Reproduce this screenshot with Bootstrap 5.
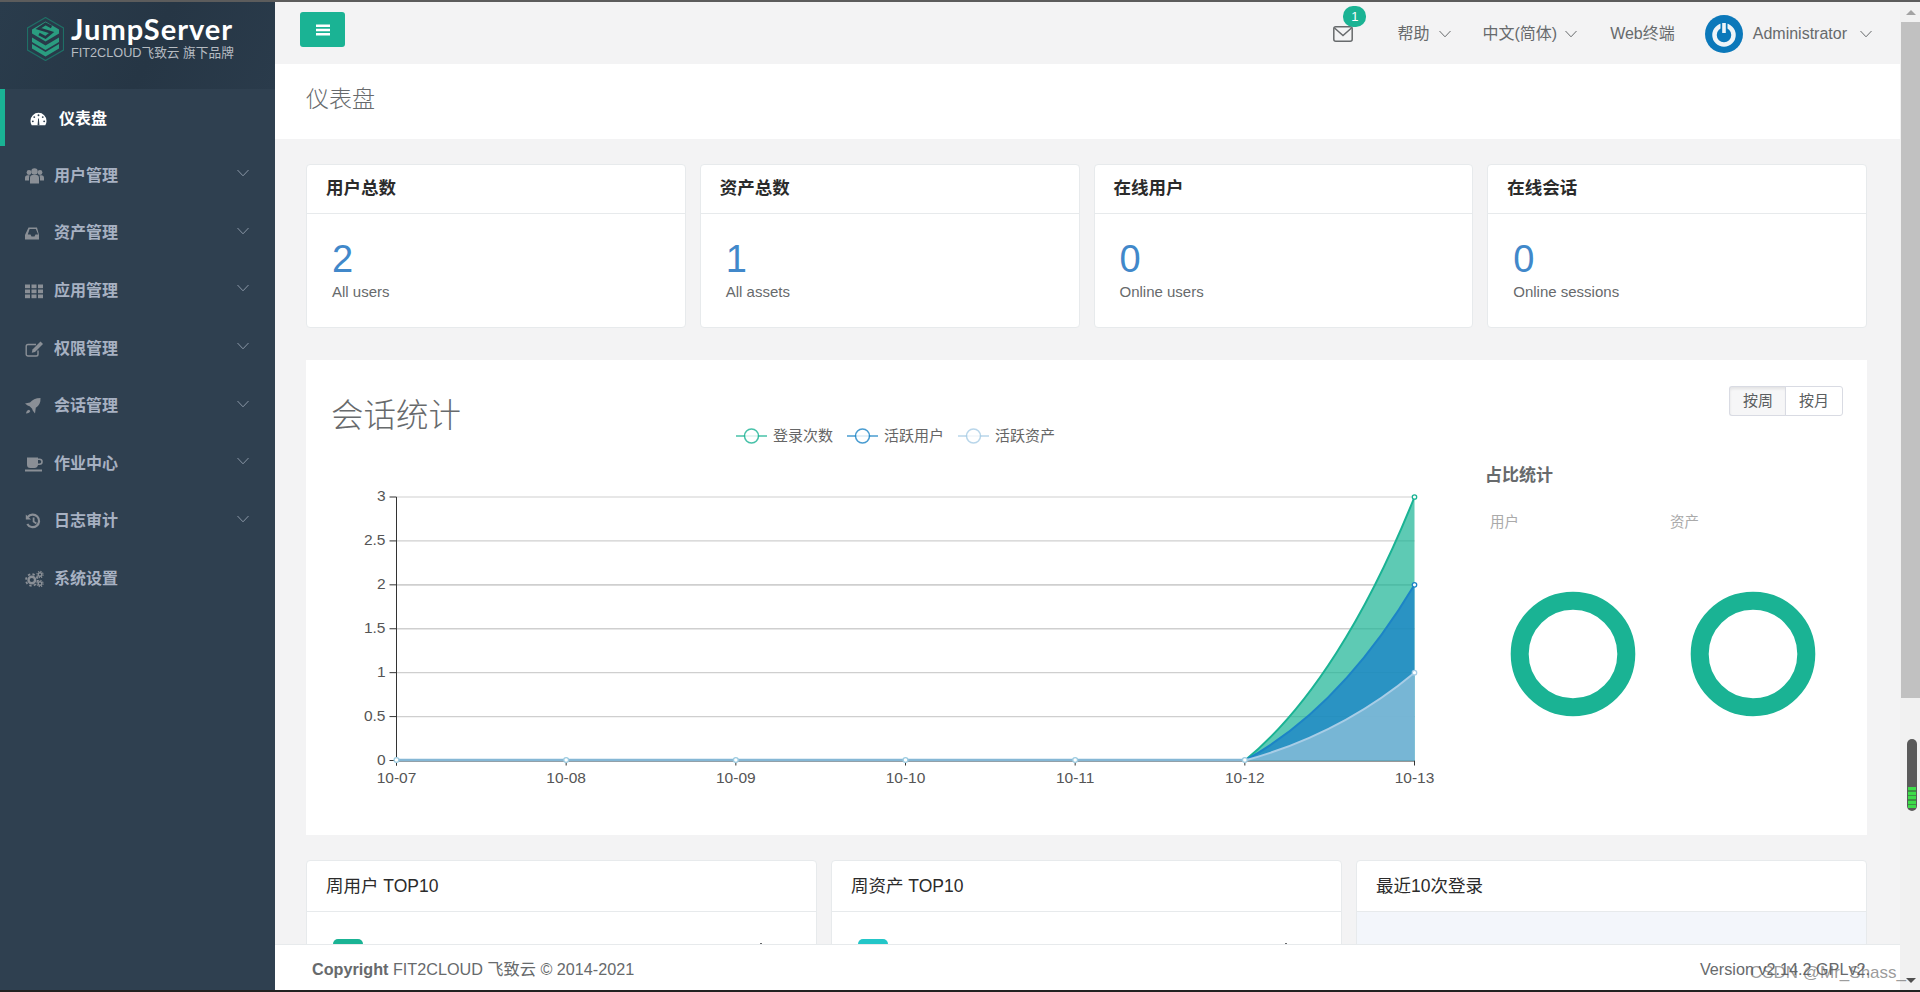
<!doctype html>
<html lang="zh-CN">
<head>
<meta charset="utf-8">
<title>仪表盘</title>
<link href="https://cdn.jsdelivr.net/npm/bootstrap@5.3.0/dist/css/bootstrap.min.css" rel="stylesheet">
<style>
:root{--js-fonts:"Liberation Sans","Noto Sans CJK SC",sans-serif;}
html,body{height:100%;overflow:hidden;}
body{font-family:var(--js-fonts);font-size:13px;color:#676a6c;background:#f3f3f4;}
.app-shell{height:992px;border-top:2px solid #5c5c5c;border-bottom:2px solid #222;position:relative;}
.side-col{width:275px;flex:none;background:#2f4050;}
.logo-box{height:87px;background:linear-gradient(115deg,#2a3c4c 0,#263645 55%,#2a3b4b 100%);padding:15px 0 0 27px;}
.logo-mark{margin-right:7px;flex:none;}
.logo-main{font-family:"Lato","Liberation Sans",sans-serif;font-weight:700;font-size:29px;line-height:32px;color:#fff;letter-spacing:1px;margin-top:-4px;}
.logo-sub{font-size:12.7px;line-height:14px;color:#b6bcc2;margin-top:1px;white-space:nowrap;}
.side-item{height:57.6px;padding:2px 0 0 25px;color:#a7b1c2;font-weight:700;font-size:16px;}
.side-item svg.ico{width:19px;height:18px;margin-right:10px;flex:none;fill:#8a8f96;}
.side-item .chev{margin-left:auto;margin-right:26px;margin-top:-5px;}
.side-first{height:57px;border-left:5px solid #1ab394;padding-left:25px;color:#fff;}
.side-first svg.ico{width:17px;fill:#fff;margin-right:12px;}
.main-col{min-width:0;}
.top-strip{height:62px;flex:none;padding:10px 28px 0 25px;background:#f3f3f4;}
.top-tools{height:44px;}
.menu-btn{width:45px;height:35px;background:#1ab394;border-radius:3px;border:0;padding:0;}
.top-link{font-size:16px;color:#676a6c;white-space:nowrap;}
.mail-box{position:relative;width:20px;height:16px;margin-right:44px;margin-top:-5px;}
.mail-badge{position:absolute;left:10px;top:-18px;width:23px;height:21px;border-radius:10px;background:#1ab394;color:#fff;font-size:13px;line-height:21px;text-align:center;}
.chev-help{margin:0 31px 0 10px;}
.chev-lang{margin:0 33px 0 8px;}
.web-link{margin-right:30px;}
.avatar-ico{margin-right:10px;}
.user-link{margin-right:13px;}
.page-head{height:75px;flex:none;background:#fff;padding:0 0 4px 31px;font-size:23px;font-weight:300;color:#676a6c;}
.scroll-part{flex:1 1 auto;min-height:0;overflow:hidden;padding:25px 33px 0 31px;}
.stat-row{display:grid;grid-template-columns:repeat(4,1fr);gap:14px;}
.info-card{background:#fff;border:1px solid #e7eaec;border-radius:4px;overflow:hidden;}
.info-head{height:49px;padding:0 19px 2px;border-bottom:1px solid #e7eaec;font-size:17.5px;font-weight:700;color:#2b2b2b;}
.info-body{height:113px;padding:20px 25px 0;}
.big-num{font-size:38px;line-height:50px;color:#4188ca;}
.num-note{font-size:15px;line-height:16px;color:#676a6c;}
.chart-panel{margin-top:32px;height:475px;background:#fff;position:relative;}
.chart-title{position:absolute;left:25px;top:35px;font-size:32.5px;line-height:42px;font-weight:300;color:#676a6c;}
.range-group{position:absolute;right:24px;top:26px;}
.range-btn{font-size:15px;line-height:18px;height:30px;padding:5px 13px;border:1px solid #d9dbe3;background:#fff;color:#5b5e60;border-radius:0;}
.range-btn.on{background:#f6f6f7;box-shadow:inset 0 2px 3px rgba(0,0,0,.08);}
.range-btn:first-child{border-radius:3px 0 0 3px;border-right:0;}
.range-btn:last-child{border-radius:0 3px 3px 0;}
.chart-svg{position:absolute;left:0;top:0;width:1561px;height:475px;}
.chart-svg text{font-family:var(--js-fonts);}
.rank-row{display:grid;grid-template-columns:repeat(3,1fr);gap:14px;margin-top:25px;}
.rank-head{height:51px;padding:0 19px;border-bottom:1px solid #e7eaec;font-size:17.5px;color:#2b2b2b;}
.rank-body{height:80px;padding:27px 54px 0 26px;}
.rank-tile{width:30px;height:30px;border-radius:5px;background:#1ab394;}
.rank-tile-alt{background:#23c6c8;}
.rank-dot{width:2px;height:2px;margin-top:4px;background:#676a6c;}
.rank-body-alt{background:#f3f6fb;}
.foot-bar{height:46px;flex:none;background:#fff;border-top:1px solid #e7eaec;padding:3px 30px 0 37px;font-size:16.2px;color:#676a6c;}
.fake-scroll{width:20px;flex:none;background:#f1f1f1;position:relative;}
.scroll-thumb{position:absolute;left:1px;right:0;top:20px;height:676px;background:#c1c1c1;}
.scroll-up,.scroll-down{position:absolute;left:6px;width:0;height:0;border-left:5px solid transparent;border-right:5px solid transparent;}
.scroll-up{top:8px;border-bottom:5px solid #a3a3a3;}
.scroll-down{bottom:7px;border-top:5px solid #505050;}
.side-widget{position:absolute;left:7px;top:737px;width:10px;height:72px;border-radius:5px;background:#5a5a5a;overflow:hidden;}
.widget-green{position:absolute;left:1px;right:1px;bottom:3px;height:21px;background:repeating-linear-gradient(#3ddc4a 0 3px,#3f8f46 3px 4.5px);}
.mark-overlay{position:absolute;right:14px;bottom:5px;font-size:17px;line-height:24px;color:rgba(90,90,90,.62);pointer-events:none;white-space:nowrap;}
</style>
</head>
<body>
<div class="app-shell d-flex">
  <aside class="side-col d-flex flex-column">
    <div class="logo-box d-flex align-items-start">
      <svg class="logo-mark" width="37" height="44" viewBox="0 0 37 44" aria-hidden="true">
        <path d="M18.500 .5 36.500 11V33L18.500 43.500 .5 33V11Z" fill="none" stroke="#1f6f66" stroke-width="1.200"/>
        <path d="M18.500 4.500 32 12.500V16.500L18.500 24.500 5 16.500V12.500Z" fill="#2a9d80"/>
        <path d="M24.500 10 18.500 6.800 11.500 11.500 24.500 15.500 18.500 20.500 12 17" fill="none" stroke="#263645" stroke-width="2.600"/>
        <path d="M5 20.500 18.500 28.500 32 20.500V25L18.500 33 5 25Z" fill="#2a9d80"/>
        <path d="M5 27 18.500 35 32 27V31.500L18.500 39.500 5 31.500Z" fill="#2a9d80"/>
      </svg>
      <div>
        <div class="logo-main">JumpServer</div>
        <div class="logo-sub">FIT2CLOUD飞致云 旗下品牌</div>
      </div>
    </div>
    <div class="side-item side-first d-flex align-items-center">
      <svg class="ico" viewBox="0 0 18 16"><path d="M9 1.500A8.500 8.500 0 0 0 .5 10c0 1.700.5 3.200 1.300 4.500h14.400A8.500 8.500 0 0 0 17.500 10 8.500 8.500 0 0 0 9 1.500Z"/><g fill="#2f4050"><circle cx="9" cy="4" r="1"/><circle cx="4.500" cy="6" r="1"/><circle cx="13.500" cy="6" r="1"/><circle cx="3" cy="10.500" r="1"/><circle cx="15" cy="10.500" r="1"/><path d="M8 14.500 8.600 7.500h.8L10 14.500Z"/></g></svg>
      <span>仪表盘</span>
    </div>
    <div class="side-item d-flex align-items-center">
      <svg class="ico" viewBox="0 0 19 18"><circle cx="4" cy="5.500" r="2.400"/><circle cx="15" cy="5.500" r="2.400"/><circle cx="9.500" cy="4.500" r="3.200"/><path d="M0 13.500V11c0-2 1-2.800 2.500-2.800h2L4 11v2.500ZM19 13.500V11c0-2-1-2.800-2.500-2.800h-2L15 11v2.500ZM5 16.500V11c0-2 1-3 2.500-3h4c1.500 0 2.500 1 2.500 3v5.500Z"/></svg>
      <span>用户管理</span>
      <svg class="chev" width="12" height="8" viewBox="0 0 12 8"><path d="M.5 1 6 6.800 11.500 1" fill="none" stroke="#8a96a5"/></svg>
    </div>
    <div class="side-item d-flex align-items-center">
      <svg class="ico" viewBox="0 0 19 18"><path d="M3.500 3.500h8.500L14 11v4.500H0V11Zm1.100 1.500L2.800 10.500h2.700l1 2h3l1-2h2.700L10.800 5Z"/></svg>
      <span>资产管理</span>
      <svg class="chev" width="12" height="8" viewBox="0 0 12 8"><path d="M.5 1 6 6.800 11.500 1" fill="none" stroke="#8a96a5"/></svg>
    </div>
    <div class="side-item d-flex align-items-center">
      <svg class="ico" viewBox="0 0 19 18"><rect x="0" y="2.500" width="5" height="3.700"/><rect x="6.500" y="2.500" width="5" height="3.700"/><rect x="13" y="2.500" width="5" height="3.700"/><rect x="0" y="7.500" width="5" height="3.700"/><rect x="6.500" y="7.500" width="5" height="3.700"/><rect x="13" y="7.500" width="5" height="3.700"/><rect x="0" y="12.500" width="5" height="3.700"/><rect x="6.500" y="12.500" width="5" height="3.700"/><rect x="13" y="12.500" width="5" height="3.700"/></svg>
      <span>应用管理</span>
      <svg class="chev" width="12" height="8" viewBox="0 0 12 8"><path d="M.5 1 6 6.800 11.500 1" fill="none" stroke="#8a96a5"/></svg>
    </div>
    <div class="side-item d-flex align-items-center">
      <svg class="ico" viewBox="0 0 19 18"><path d="M13 10.500v3.700c0 1-.7 1.800-1.800 1.800H3c-1 0-1.800-.8-1.800-1.800V6.300c0-1 .8-1.800 1.800-1.800h8" fill="none" stroke="#8a8f96" stroke-width="1.400"/><path d="M15.500 1.500 18 4 10 12l-3.200.7.700-3.200Z"/></svg>
      <span>权限管理</span>
      <svg class="chev" width="12" height="8" viewBox="0 0 12 8"><path d="M.5 1 6 6.800 11.500 1" fill="none" stroke="#8a96a5"/></svg>
    </div>
    <div class="side-item d-flex align-items-center">
      <svg class="ico" viewBox="0 0 19 18"><path d="M15.500 1c.3 4.500-1.300 7.700-4.700 9.800l-.8 5.700-2.300-3-.6-1.800-2.500-2.500-2-.6L0 6.600l5-1C7.300 2.800 10.500 1 15.500 1Z"/><path d="M1 16.500c.3-2 1.200-3.300 3-3.800l1.300 1.300c-.5 1.700-1.800 2.300-4.300 2.500Z"/></svg>
      <span>会话管理</span>
      <svg class="chev" width="12" height="8" viewBox="0 0 12 8"><path d="M.5 1 6 6.800 11.500 1" fill="none" stroke="#8a96a5"/></svg>
    </div>
    <div class="side-item d-flex align-items-center">
      <svg class="ico" viewBox="0 0 19 18"><path d="M0 14.500h17v2H0ZM2 2.500h11v1h1.500a3.300 3.300 0 0 1 0 6.600H13a3.800 3.800 0 0 1-3.500 3H5.500A3.500 3.500 0 0 1 2 9.500Zm11 2.500V8.500h1.500a1.700 1.700 0 0 0 0-3.500Z" fill-rule="evenodd"/></svg>
      <span>作业中心</span>
      <svg class="chev" width="12" height="8" viewBox="0 0 12 8"><path d="M.5 1 6 6.800 11.500 1" fill="none" stroke="#8a96a5"/></svg>
    </div>
    <div class="side-item d-flex align-items-center">
      <svg class="ico" viewBox="0 0 19 18"><path d="M2.800 5A6.300 6.300 0 1 1 2.300 12" fill="none" stroke="#8a8f96" stroke-width="2.200"/><path d="M.8 2.500 6 7.500H.8Z"/><path d="M7.700 5.500h1.800v3.700l2.400 1.600-1 1.400-3.200-2.200Z"/></svg>
      <span>日志审计</span>
      <svg class="chev" width="12" height="8" viewBox="0 0 12 8"><path d="M.5 1 6 6.800 11.500 1" fill="none" stroke="#8a96a5"/></svg>
    </div>
    <div class="side-item d-flex align-items-center">
      <svg class="ico" viewBox="0 0 19 18"><circle cx="6.800" cy="10" r="3.300" fill="none" stroke="#8a8f96" stroke-width="2.400"/><circle cx="6.800" cy="10" r="5.800" fill="none" stroke="#8a8f96" stroke-width="1.800" stroke-dasharray="2.300 2.250"/><circle cx="15" cy="4.500" r="1.800" fill="none" stroke="#8a8f96" stroke-width="1.400"/><circle cx="15" cy="4.500" r="3.100" fill="none" stroke="#8a8f96" stroke-width="1.100" stroke-dasharray="1.300 1.130"/><circle cx="15" cy="13.500" r="1.800" fill="none" stroke="#8a8f96" stroke-width="1.400"/><circle cx="15" cy="13.500" r="3.100" fill="none" stroke="#8a8f96" stroke-width="1.100" stroke-dasharray="1.300 1.130"/></svg>
      <span>系统设置</span>
    </div>
  </aside>

  <div class="main-col d-flex flex-column flex-grow-1">
    <div class="top-strip d-flex align-items-start">
      <button class="menu-btn d-flex align-items-center justify-content-center" aria-label="menu">
        <svg width="14" height="12" viewBox="0 0 14 12"><path d="M0 .5h14v2.400H0ZM0 4.800h14v2.400H0ZM0 9.100h14v2.400H0Z" fill="#fff"/></svg>
      </button>
      <div class="top-tools ms-auto d-flex align-items-center">
        <div class="mail-box">
          <svg width="20" height="16" viewBox="0 0 20 16"><rect x=".8" y=".8" width="18.400" height="14.400" rx="2" fill="none" stroke="#676a6c" stroke-width="1.500"/><path d="M1.500 2 10 9.500 18.500 2" fill="none" stroke="#676a6c" stroke-width="1.500"/></svg>
          <span class="mail-badge">1</span>
        </div>
        <span class="top-link">帮助</span>
        <svg class="chev-help" width="12" height="8" viewBox="0 0 12 8"><path d="M.5 1 6 6.800 11.500 1" fill="none" stroke="#676a6c"/></svg>
        <span class="top-link">中文(简体)</span>
        <svg class="chev-lang" width="12" height="8" viewBox="0 0 12 8"><path d="M.5 1 6 6.800 11.500 1" fill="none" stroke="#676a6c"/></svg>
        <span class="top-link web-link">Web终端</span>
        <svg class="avatar-ico" width="38" height="38" viewBox="0 0 38 38"><circle cx="19" cy="19" r="19" fill="#0b78ba"/><circle cx="19" cy="20" r="9.500" fill="none" stroke="#eef4f8" stroke-width="4.500"/><rect x="15.500" y="6" width="7" height="13" fill="#0b78ba"/><rect x="17.200" y="8" width="3.600" height="10" fill="#eef4f8"/></svg>
        <span class="top-link user-link">Administrator</span>
        <svg width="12" height="8" viewBox="0 0 12 8"><path d="M.5 1 6 6.800 11.500 1" fill="none" stroke="#676a6c"/></svg>
      </div>
    </div>
    <div class="page-head d-flex align-items-center">仪表盘</div>
    <div class="scroll-part">
      <div class="stat-row">
        <div class="info-card"><div class="info-head d-flex align-items-center">用户总数</div><div class="info-body"><div class="big-num">2</div><div class="num-note">All users</div></div></div>
        <div class="info-card"><div class="info-head d-flex align-items-center">资产总数</div><div class="info-body"><div class="big-num">1</div><div class="num-note">All assets</div></div></div>
        <div class="info-card"><div class="info-head d-flex align-items-center">在线用户</div><div class="info-body"><div class="big-num">0</div><div class="num-note">Online users</div></div></div>
        <div class="info-card"><div class="info-head d-flex align-items-center">在线会话</div><div class="info-body"><div class="big-num">0</div><div class="num-note">Online sessions</div></div></div>
      </div>
      <div class="chart-panel">
        <svg id="chart" class="chart-svg" viewBox="0 0 1561 475"></svg>
        <div class="chart-title">会话统计</div>
        <div class="btn-group range-group" role="group">
          <button class="btn range-btn on">按周</button>
          <button class="btn range-btn">按月</button>
        </div>
      </div>
      <div class="rank-row">
        <div class="info-card"><div class="rank-head d-flex align-items-center">周用户 TOP10</div><div class="rank-body d-flex justify-content-between"><div class="rank-tile"></div><div class="rank-dot"></div></div></div>
        <div class="info-card"><div class="rank-head d-flex align-items-center">周资产 TOP10</div><div class="rank-body d-flex justify-content-between"><div class="rank-tile rank-tile-alt"></div><div class="rank-dot"></div></div></div>
        <div class="info-card"><div class="rank-head d-flex align-items-center">最近10次登录</div><div class="rank-body rank-body-alt"></div></div>
      </div>
    </div>
    <div class="foot-bar d-flex align-items-center justify-content-between">
      <span><b>Copyright</b> FIT2CLOUD 飞致云 © 2014-2021</span>
      <span>Version v2.14.2 GPLv2.</span>
    </div>
  </div>
  <div class="fake-scroll">
    <span class="scroll-up"></span>
    <div class="scroll-thumb"></div>
    <div class="side-widget"><div class="widget-green"></div></div>
    <span class="scroll-down"></span>
  </div>
  <div class="mark-overlay">CSDN @Mr_Shass_</div>
</div>
<script>
(function(){
  var s='', i;
  // chart panel origin in page: x=306, y=360
  var X0=90.5, X1=1108.5, Y0=400.5, Y3=137;
  var W=(X1-X0)/6;
  function y(v){return Y0-(Y0-Y3)*v/3;}
  [0.5,1,1.5,2,2.5,3].forEach(function(v){
    s+='<line x1="'+X0+'" x2="'+X1+'" y1="'+y(v)+'" y2="'+y(v)+'" stroke="#cfcfcf" stroke-width="'+(v==2||v==1.5?1.6:1.2)+'"/>';
  });
  s+='<line x1="'+X0+'" x2="'+X0+'" y1="'+Y3+'" y2="'+(Y0+5)+'" stroke="#333"/>';
  s+='<line x1="'+X0+'" x2="'+X1+'" y1="'+(Y0+.5)+'" y2="'+(Y0+.5)+'" stroke="#333"/>';
  ['0','0.5','1','1.5','2','2.5','3'].forEach(function(t,k){
    var yy=y(k/2);
    s+='<line x1="'+(X0-7)+'" x2="'+X0+'" y1="'+yy+'" y2="'+yy+'" stroke="#333"/>';
    s+='<text x="'+(X0-11)+'" y="'+(yy+4)+'" text-anchor="end" font-size="15.500" fill="#555">'+t+'</text>';
  });
  ['10-07','10-08','10-09','10-10','10-11','10-12','10-13'].forEach(function(l,k){
    var xx=X0+W*k;
    s+='<line x1="'+xx+'" x2="'+xx+'" y1="'+Y0+'" y2="'+(Y0+5)+'" stroke="#333"/>';
    s+='<text x="'+xx+'" y="'+(Y0+22)+'" text-anchor="middle" font-size="15.500" fill="#555">'+l+'</text>';
  });
  var xa=X0+W*5, xb=X1;
  function curve(v){return 'M'+xa+' '+Y0+' C'+(xa+W*.38)+' '+(Y0-(Y0-y(v))*.20)+' '+(xa+W*.72)+' '+(Y0-(Y0-y(v))*.55)+' '+xb+' '+y(v);}
  var series=[[3,'#1ab394','rgba(26,179,148,.7)'],[2,'#1c84c6','rgba(28,132,198,.78)'],[1,'#a8cde6','rgba(150,195,220,.72)']];
  series.forEach(function(a){
    s+='<path d="'+curve(a[0])+' L'+xb+' '+Y0+' Z" fill="'+a[2]+'"/>';
    s+='<path d="'+curve(a[0])+'" fill="none" stroke="'+a[1]+'" stroke-width="2"/>';
    s+='<circle cx="'+xb+'" cy="'+y(a[0])+'" r="2.200" fill="#fff" stroke="'+a[1]+'" stroke-width="1.300"/>';
  });
  s+='<line x1="'+X0+'" x2="'+xa+'" y1="'+(Y0-.5)+'" y2="'+(Y0-.5)+'" stroke="#85b7d5" stroke-width="2.400"/>';
  for(i=0;i<6;i++){ s+='<circle cx="'+(X0+W*i)+'" cy="'+(Y0-.5)+'" r="2.400" fill="#fff" stroke="#9ccbe0" stroke-width="1.300"/>'; }
  // legend
  [[430,'#1ab394','登录次数'],[541,'#1c84c6','活跃用户'],[652,'#a8cde6','活跃资产']].forEach(function(a){
    var lx=a[0], ly=76;
    s+='<line x1="'+lx+'" x2="'+(lx+31)+'" y1="'+ly+'" y2="'+ly+'" stroke="'+a[1]+'" stroke-width="1.500" opacity=".8"/>';
    s+='<circle cx="'+(lx+15.5)+'" cy="'+ly+'" r="7" fill="#fff" stroke="'+a[1]+'" stroke-width="1.500" opacity=".8"/>';
    s+='<text x="'+(lx+37)+'" y="'+(ly+5)+'" font-size="15" fill="#666">'+a[2]+'</text>';
  });
  // side stats
  s+='<text x="1179" y="121" font-size="17" font-weight="700" fill="#676a6c">占比统计</text>';
  s+='<text x="1184" y="167" font-size="14.500" fill="#aaa">用户</text>';
  s+='<text x="1364" y="167" font-size="14.500" fill="#aaa">资产</text>';
  [1267,1447].forEach(function(cx){
    s+='<circle cx="'+cx+'" cy="294" r="53.300" fill="none" stroke="#1ab394" stroke-width="18"/>';
  });
  document.getElementById('chart').innerHTML=s;
})();
</script>
<script src="https://cdn.jsdelivr.net/npm/bootstrap@5.3.0/dist/js/bootstrap.bundle.min.js"></script>
</body>
</html>
